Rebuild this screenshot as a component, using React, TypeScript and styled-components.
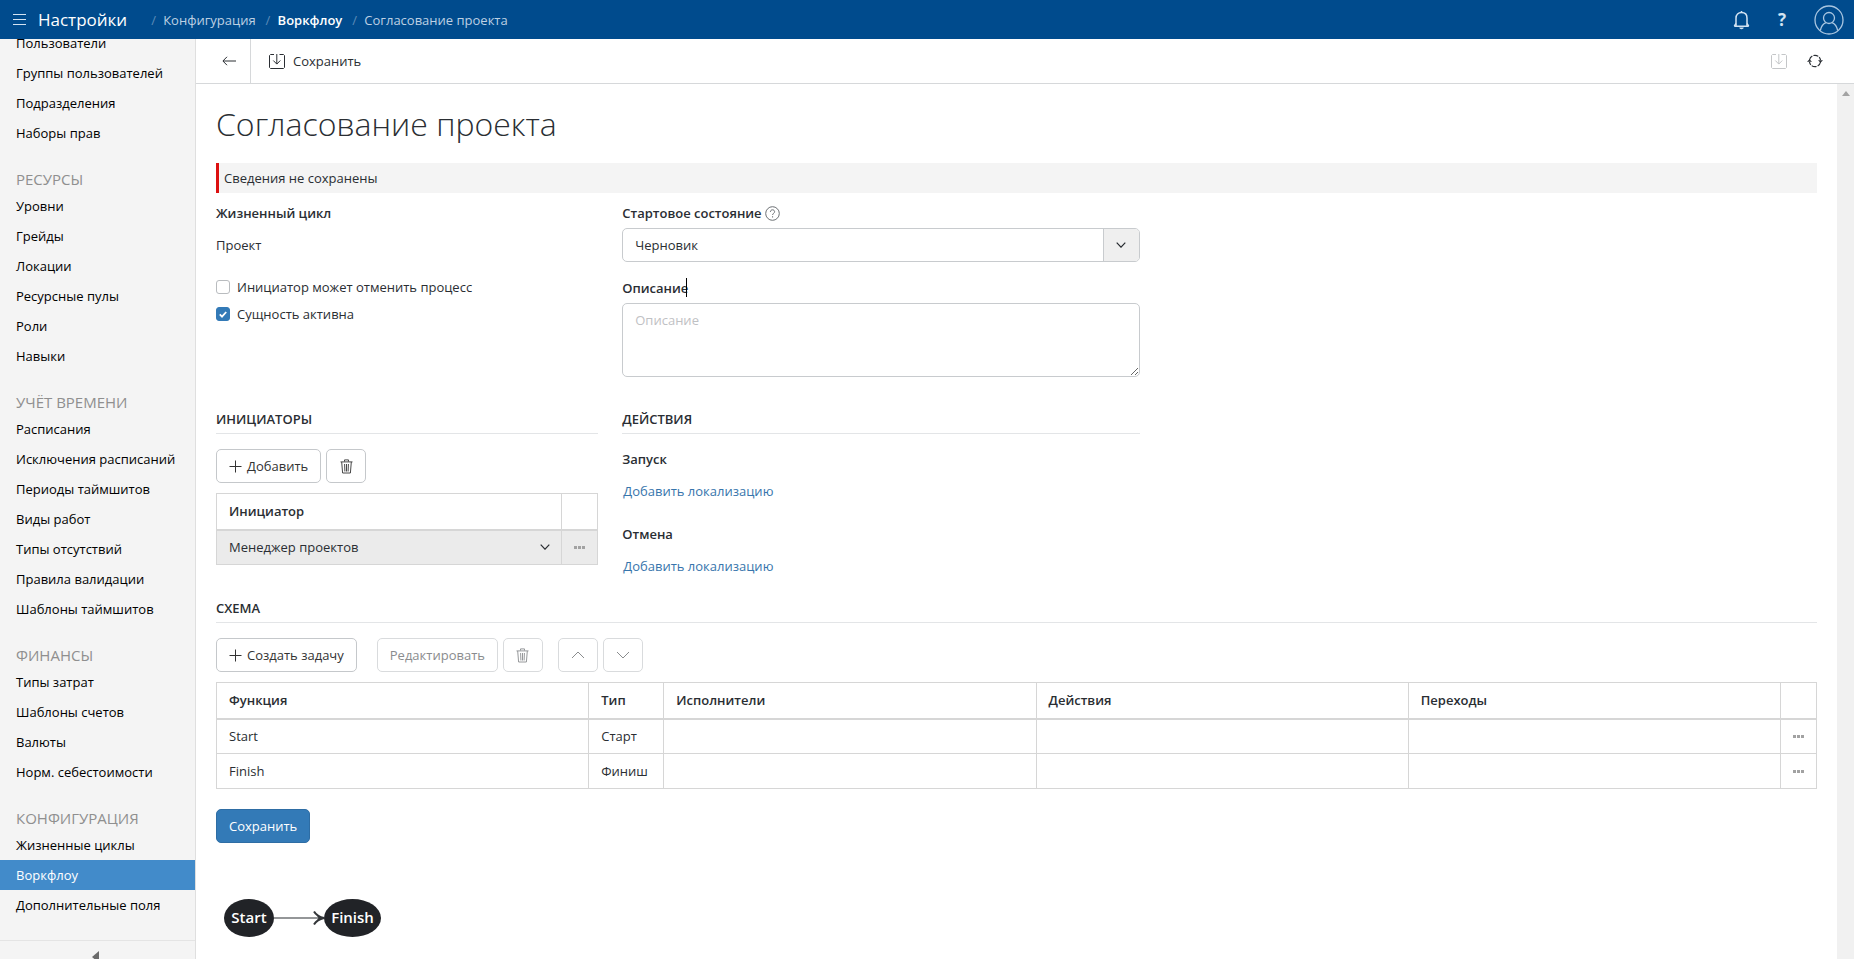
import React from 'react';
import styled, { createGlobalStyle, css } from 'styled-components';

const GlobalStyle = createGlobalStyle`
  *, *::before, *::after { box-sizing: border-box; }
  body {
    margin: 0;
    background: #fff;
    color: #2a2e33;
    font: 400 13px/20px "Open Sans", "Noto Sans", sans-serif;
  }
  button, input, select, textarea { font: inherit; color: inherit; }
  svg { display: block; flex: none; }
`;

/* ---------- shell ---------- */

const Shell = styled.div`
  display: flex;
  flex-direction: column;
  height: 100vh;
  overflow: hidden;
`;

const Header = styled.header`
  display: flex;
  align-items: center;
  flex: none;
  height: 39px;
  padding: 0 10px 0 13px;
  background: #004b8d;
  color: #fff;
`;

const HeaderButton = styled.button`
  display: flex;
  align-items: center;
  justify-content: center;
  padding: 0;
  border: 0;
  background: none;
  color: #d3e3f2;
  font-size: 17px;
  font-weight: 700;
`;

const AppTitle = styled.span`
  margin-left: 12px;
  font-size: 17px;
  font-weight: 500;
`;

const Crumbs = styled.nav`
  display: flex;
  flex: 1;
  margin-left: 24px;
`;

const Crumb = styled.a<{ $strong?: boolean }>`
  color: ${p => (p.$strong ? '#fff' : '#bdd0e3')};
  font-weight: ${p => (p.$strong ? 600 : 400)};
  text-decoration: none;
  &::before {
    content: '/';
    display: inline-block;
    width: 12px;
    color: #5d8bb8;
    font-weight: 400;
  }
  & + & { margin-left: 10px; }
`;

const HeaderActions = styled.div`
  display: flex;
  align-items: center;
  gap: 28px;
`;

const Body = styled.div`
  display: flex;
  flex: 1;
  min-height: 0;
`;

/* ---------- sidebar ---------- */

const Sidebar = styled.aside`
  display: flex;
  flex-direction: column;
  flex: none;
  width: 196px;
  border-right: 1px solid #dfdfdf;
  background: #f4f4f4;
`;

const SidebarScroll = styled.nav`
  flex: 1;
  min-height: 0;
  overflow: hidden;
`;

const SidebarList = styled.div`
  margin-top: -11px;
`;

const GroupTitle = styled.h2`
  margin: 20px 0 0;
  padding-left: 16px;
  color: #8f8f8f;
  font-size: 15px;
  font-weight: 400;
  line-height: 23px;
`;

const NavItem = styled.a<{ $active?: boolean }>`
  display: block;
  padding-left: 16px;
  color: ${p => (p.$active ? '#fff' : '#000')};
  background: ${p => (p.$active ? '#428bca' : 'transparent')};
  line-height: 30px;
  text-decoration: none;
  white-space: nowrap;
`;

const SidebarFooter = styled.button`
  display: flex;
  align-items: flex-start;
  justify-content: center;
  flex: none;
  height: 19px;
  padding: 10px 5px 0 0;
  border: 0;
  border-top: 1px solid #e4e4e4;
  background: none;
  overflow: hidden;
  color: #6b6b6b;
`;

/* ---------- main ---------- */

const Main = styled.main`
  display: flex;
  flex-direction: column;
  flex: 1;
  min-width: 0;
`;

const Toolbar = styled.div`
  display: flex;
  flex: none;
  height: 45px;
  padding-right: 31px;
  border-bottom: 1px solid #d6d8da;
`;

const ToolButton = styled.button<{ $divider?: boolean }>`
  display: flex;
  align-items: center;
  gap: 8px;
  padding: 0 14px 0 18px;
  border: 0;
  background: none;
  ${p => p.$divider && css`
    padding: 0 14px 0 26px;
    border-right: 1px solid #d6d8da;
  `}
  &:disabled { color: #c4c6c8; }
`;

const ToolbarEnd = styled.div`
  display: flex;
  margin-left: auto;
  gap: 20px;
`;

const ToolIcon = styled(ToolButton)`
  padding: 0;
`;

const Viewport = styled.div`
  display: flex;
  flex: 1;
  min-height: 0;
`;

const Content = styled.div`
  flex: 1;
  min-width: 0;
  padding: 20px 20px 0;
  overflow: hidden;
`;

const ScrollTrack = styled.div`
  display: flex;
  justify-content: center;
  flex: none;
  width: 17px;
  padding-top: 7px;
  background: #f1f1f1;
  color: #a3a3a3;
`;

const PageTitle = styled.h1`
  margin: 0 0 19px;
  font-size: 32px;
  font-weight: 300;
  line-height: 40px;
`;

const Notice = styled.div`
  padding: 5px;
  border-left: 3px solid #dc1010;
  background: #f4f4f4;
`;

const Row = styled.div<{ $top?: number; $bottom: number }>`
  display: flex;
  margin: 0 -12px;
  padding: ${p => p.$top ?? 0}px 0 ${p => p.$bottom}px;
`;

const Column = styled.div<{ $span: number }>`
  flex: none;
  width: calc(100% / 12 * ${p => p.$span});
  padding: 0 12px;
`;

const Field = styled.div`
  & + & { margin-top: 16px; }
`;

const labelStyle = css`
  display: flex;
  align-items: center;
  gap: 3px;
  width: max-content;
  margin-bottom: 5px;
  font-weight: 600;
`;

const Label = styled.label`${labelStyle}`;
const Caption = styled.div`${labelStyle}`;

const CaretLabel = styled(Label)`
  position: relative;
  &::after {
    content: '';
    position: absolute;
    right: 1px;
    top: 0;
    width: 1px;
    height: 19px;
    background: #000;
  }
`;

const Value = styled.div`
  line-height: 34px;
`;

const Checks = styled.div`
  display: grid;
  gap: 7px;
  margin-top: 15px;
`;

const Check = styled.label`
  display: flex;
  align-items: center;
  gap: 7px;
`;

const CheckBox = styled.span`
  display: grid;
  place-items: center;
  & > * { grid-area: 1 / 1; }
  svg { visibility: hidden; pointer-events: none; }
  input:checked + svg { visibility: visible; }
`;

const CheckInput = styled.input`
  appearance: none;
  width: 14px;
  height: 14px;
  margin: 0;
  border: 1px solid #b9bcbf;
  border-radius: 3px;
  background: #fff;
  &:checked { border-color: #337ab7; background: #337ab7; }
`;

const SelectBox = styled.div<{ $plain?: boolean }>`
  display: grid;
  grid-template-columns: 1fr ${p => (p.$plain ? 32 : 36)}px;
  height: ${p => (p.$plain ? 33 : 34)}px;
  ${p => !p.$plain && css`
    border: 1px solid #c8cbce;
    border-radius: 5px;
    overflow: hidden;
  `}
`;

const Select = styled.select`
  grid-area: 1 / 1 / 2 / 3;
  appearance: none;
  min-width: 0;
  padding: 0 12px;
  border: 0;
  background: transparent;
`;

const SelectArrow = styled.span<{ $plain?: boolean }>`
  display: grid;
  place-items: center;
  grid-area: 1 / 2;
  pointer-events: none;
  ${p => !p.$plain && css`
    border-left: 1px solid #c8cbce;
    background: #efefef;
  `}
`;

const TextArea = styled.textarea`
  display: block;
  width: 100%;
  height: 74px;
  padding: 6px 12px;
  border: 1px solid #c8cbce;
  border-radius: 5px;
  &::placeholder { color: #bfc1c4; opacity: 1; }
`;

const SectionTitle = styled.h2`
  margin: 0 0 15px;
  padding-bottom: 4px;
  border-bottom: 1px solid #e3e5e7;
  font-size: 13px;
  font-weight: 600;
  line-height: 20px;
`;

const ButtonBar = styled.div`
  display: flex;
  margin-bottom: 10px;
`;

const ButtonGroup = styled.div<{ $gap?: number }>`
  display: flex;
  gap: 5px;
  margin-right: ${p => p.$gap ?? 0}px;
`;

const Button = styled.button<{ $icon?: boolean; $primary?: boolean }>`
  display: flex;
  align-items: center;
  justify-content: center;
  gap: 5px;
  height: 34px;
  width: ${p => (p.$icon ? '40px' : 'auto')};
  padding: 0 ${p => (p.$icon ? 0 : 12)}px;
  border: 1px solid ${p => (p.$primary ? '#2e6da4' : '#c5c8cb')};
  border-radius: 5px;
  background: ${p => (p.$primary ? '#337ab7' : '#fff')};
  color: ${p => (p.$primary ? '#fff' : '#333')};
  white-space: nowrap;
  &:disabled { border-color: #d9dbdd; color: #8a8c8e; }
`;

const LocaleLink = styled.a`
  display: block;
  width: max-content;
  padding-left: 1px;
  color: #3775ac;
  line-height: 34px;
  text-decoration: none;
`;

const Table = styled.table`
  width: 100%;
  table-layout: fixed;
  border-collapse: collapse;
  th, td {
    height: 35px;
    padding: 0 12px;
    border: 1px solid #d6d6d6;
    text-align: left;
  }
  th {
    height: 36px;
    border-bottom-width: 2px;
    font-weight: 600;
  }
`;

const Col = styled.col<{ $w?: number }>`
  width: ${p => (p.$w ? `${p.$w}px` : 'auto')};
`;

const BodyRow = styled.tr<{ $selected?: boolean }>`
  background: ${p => (p.$selected ? '#ebebeb' : '#fff')};
`;

const ControlCell = styled.td`
  && { padding: 0; }
`;

const MoreButton = styled.button`
  display: flex;
  align-items: center;
  justify-content: center;
  width: 100%;
  height: 24px;
  padding: 0;
  border: 0;
  background: none;
  color: #a2a2a2;
`;

const Submit = styled.div`
  display: flex;
  margin: 20px 0 56px;
`;

/* ---------- icons ---------- */

const line = { fill: 'none', stroke: 'currentColor' } as const;

const MenuIcon = () => (
  <svg width="13" height="11" viewBox="0 0 13 11" {...line}><path d="M0 .5h13M0 5.5h13M0 10.5h13" /></svg>
);
const BellIcon = () => (
  <svg width="17" height="20" viewBox="0 0 17 20" {...line} strokeWidth="1.5">
    <path d="M1.3 16.2h14.4M3 16V8.2C3 4.600 5.300 2.600 8.500 2.600S14 4.600 14 8.200V16" />
    <path d="M3 13.500 1.300 16.200M14 13.500l1.700 2.700M8.500 1v1.600" />
    <path d="M6.300 17.500h4.400c0 1-1 1.700-2.200 1.700s-2.200-.7-2.200-1.700z" fill="currentColor" stroke="none" />
  </svg>
);
const UserIcon = () => (
  <svg width="30" height="30" viewBox="0 0 30 30" {...line} stroke="#a9c6e1" strokeWidth="1.3">
    <circle cx="15" cy="15" r="14" />
    <circle cx="15" cy="13" r="5.500" />
    <path d="M6.300 25.500c.8-4 3-6.800 5.700-7.900M23.700 25.500c-.8-4-3-6.800-5.700-7.900" />
  </svg>
);
const BackIcon = () => (
  <svg width="14" height="10" viewBox="0 0 14 10" {...line}><path d="M14 5H1M5 .8.900 5 5 9.200" /></svg>
);
const SaveIcon = () => (
  <svg width="16" height="17" viewBox="0 0 16 17" {...line}>
    <path d="M5 1.500H1.500l-1 1v12l1 1h13l1-1v-12l-1-1H10.500M7.800 1v10M4.300 7.500l3.500 3.600 3.500-3.600" />
  </svg>
);
const RefreshIcon = () => (
  <svg width="16" height="14" viewBox="0 0 16 14" {...line} strokeWidth="1.200">
    <path d="M2.500 6C3 3.200 5.200 1.300 8 1.300c2.700 0 5 1.900 5.500 4.700M13.500 8c-.5 2.800-2.800 4.700-5.500 4.700-2.800 0-5-1.900-5.500-4.700" strokeDasharray="5 1.200" />
    <path d="M11 6.200h5l-2.500 2.500zM0 7.800h5L2.500 5.300z" fill="currentColor" stroke="none" />
  </svg>
);
const HelpIcon = () => (
  <svg width="15" height="15" viewBox="0 0 15 15" {...line} stroke="#6c7074">
    <circle cx="7.500" cy="7.500" r="6.800" />
    <path d="M5.400 5.900c0-1.300.9-2.100 2.100-2.100s2.100.8 2.100 1.900c0 1.500-2 1.700-2 3.300M7.600 10.200v1.300" />
  </svg>
);
const PlusIcon = () => (
  <svg width="13" height="13" viewBox="0 0 13 13" {...line}><path d="M6.500 .5v12M.5 6.500h12" /></svg>
);
const TrashIcon = () => (
  <svg width="13" height="15" viewBox="0 0 13 15" {...line} strokeWidth=".9">
    <path d="M.5 2.900h12M4.500 2.500V.9h4v1.600M1.700 3l.9 11h7.800l.9-11M4.600 5l.3 7.500M6.500 5v7.500M8.400 5l-.3 7.500" />
  </svg>
);
const Chevron = ({ up, wide }: { up?: boolean; wide?: boolean }) => (
  wide
    ? <svg width="14" height="8" viewBox="0 0 14 8" {...line}><path d={up ? 'M1 7l6-6 6 6' : 'M1 1l6 6 6-6'} /></svg>
    : <svg width="10" height="6" viewBox="0 0 10 6" {...line} strokeWidth="1.200"><path d="M.7.700 5 5.200 9.300.7" /></svg>
);
const DotsIcon = () => (
  <svg width="11" height="3" viewBox="0 0 11 3" fill="currentColor" shapeRendering="crispEdges">
    <rect width="3" height="3" /><rect x="4" width="3" height="3" /><rect x="8" width="3" height="3" />
  </svg>
);
const CheckIcon = () => (
  <svg width="8" height="7" viewBox="0 0 8 7" fill="none" stroke="#fff" strokeWidth="1.800"><path d="M.8 3.400 3 5.600 7.200 1" /></svg>
);
const Diagram = () => (
  <svg width="176" height="40" viewBox="0 0 176 40" fontSize="15" fontWeight="600" textAnchor="middle">
    <path d="M58 19h48" stroke="#707376" strokeWidth="1.500" />
    <path d="M98 12.500q3 5 10 6.500-7 1.500-10 6.500" fill="none" stroke="#333639" strokeWidth="2" />
    <path d="M101 16.500l7 2.500-7 2.500 1.500-2.500z" fill="#333639" />
    <ellipse cx="33" cy="19" rx="25" ry="19" fill="#212327" />
    <ellipse cx="136.500" cy="19" rx="28.500" ry="19" fill="#212327" />
    <text x="33" y="24" fill="#fff">Start</text>
    <text x="136.500" y="24" fill="#fff">Finish</text>
  </svg>
);

/* ---------- data ---------- */

const groups: { title?: string; items: string[] }[] = [
  { items: ['Пользователи', 'Группы пользователей', 'Подразделения', 'Наборы прав'] },
  { title: 'РЕСУРСЫ', items: ['Уровни', 'Грейды', 'Локации', 'Ресурсные пулы', 'Роли', 'Навыки'] },
  {
    title: 'УЧЁТ ВРЕМЕНИ',
    items: ['Расписания', 'Исключения расписаний', 'Периоды таймшитов', 'Виды работ', 'Типы отсутствий', 'Правила валидации', 'Шаблоны таймшитов'],
  },
  { title: 'ФИНАНСЫ', items: ['Типы затрат', 'Шаблоны счетов', 'Валюты', 'Норм. себестоимости'] },
  { title: 'КОНФИГУРАЦИЯ', items: ['Жизненные циклы', 'Воркфлоу', 'Дополнительные поля'] },
];

const steps = [['Start', 'Старт'], ['Finish', 'Финиш']];

const More = () => <MoreButton type="button" aria-label="Меню строки"><DotsIcon /></MoreButton>;

export default function App() {
  return (
    <Shell>
      <GlobalStyle />
      <Header>
        <HeaderButton type="button" aria-label="Меню"><MenuIcon /></HeaderButton>
        <AppTitle>Настройки</AppTitle>
        <Crumbs>
          <Crumb href="#config">Конфигурация</Crumb>
          <Crumb href="#workflow" $strong>Воркфлоу</Crumb>
          <Crumb href="#current">Согласование проекта</Crumb>
        </Crumbs>
        <HeaderActions>
          <HeaderButton type="button" aria-label="Уведомления"><BellIcon /></HeaderButton>
          <HeaderButton type="button" aria-label="Справка">?</HeaderButton>
          <HeaderButton type="button" aria-label="Профиль"><UserIcon /></HeaderButton>
        </HeaderActions>
      </Header>

      <Body>
        <Sidebar>
          <SidebarScroll>
            <SidebarList>
              {groups.map(g => (
                <React.Fragment key={g.title ?? 'top'}>
                  {g.title && <GroupTitle>{g.title}</GroupTitle>}
                  {g.items.map(item => (
                    <NavItem key={item} href="#" $active={item === 'Воркфлоу'}>{item}</NavItem>
                  ))}
                </React.Fragment>
              ))}
            </SidebarList>
          </SidebarScroll>
          <SidebarFooter type="button" aria-label="Свернуть">
            <svg width="7" height="12" viewBox="0 0 7 12" fill="currentColor"><path d="M7 0v12L0 6z" /></svg>
          </SidebarFooter>
        </Sidebar>

        <Main>
          <Toolbar>
            <ToolButton type="button" aria-label="Назад" $divider><BackIcon /></ToolButton>
            <ToolButton type="button"><SaveIcon />Сохранить</ToolButton>
            <ToolbarEnd>
              <ToolIcon type="button" aria-label="Сохранить и закрыть" disabled><SaveIcon /></ToolIcon>
              <ToolIcon type="button" aria-label="Обновить"><RefreshIcon /></ToolIcon>
            </ToolbarEnd>
          </Toolbar>

          <Viewport>
            <Content>
              <PageTitle>Согласование проекта</PageTitle>
              <Notice role="status">Сведения не сохранены</Notice>

              <Row $top={10} $bottom={32}>
                <Column $span={3}>
                  <Field>
                    <Caption>Жизненный цикл</Caption>
                    <Value>Проект</Value>
                  </Field>
                  <Checks>
                    <Check>
                      <CheckBox><CheckInput type="checkbox" /><CheckIcon /></CheckBox>
                      Инициатор может отменить процесс
                    </Check>
                    <Check>
                      <CheckBox><CheckInput type="checkbox" defaultChecked /><CheckIcon /></CheckBox>
                      Сущность активна
                    </Check>
                  </Checks>
                </Column>
                <Column $span={4}>
                  <Field>
                    <Label htmlFor="state">Стартовое состояние <HelpIcon /></Label>
                    <SelectBox>
                      <Select id="state"><option>Черновик</option></Select>
                      <SelectArrow><Chevron /></SelectArrow>
                    </SelectBox>
                  </Field>
                  <Field>
                    <CaretLabel htmlFor="description">Описание</CaretLabel>
                    <TextArea id="description" placeholder="Описание" />
                  </Field>
                </Column>
              </Row>

              <Row $bottom={15}>
                <Column $span={3}>
                  <SectionTitle>ИНИЦИАТОРЫ</SectionTitle>
                  <ButtonBar>
                    <ButtonGroup>
                      <Button type="button"><PlusIcon />Добавить</Button>
                      <Button type="button" $icon aria-label="Удалить инициатора"><TrashIcon /></Button>
                    </ButtonGroup>
                  </ButtonBar>
                  <Table>
                    <colgroup><Col /><Col $w={36} /></colgroup>
                    <thead><tr><th>Инициатор</th><th /></tr></thead>
                    <tbody>
                      <BodyRow $selected>
                        <ControlCell>
                          <SelectBox $plain>
                            <Select aria-label="Инициатор"><option>Менеджер проектов</option></Select>
                            <SelectArrow $plain><Chevron /></SelectArrow>
                          </SelectBox>
                        </ControlCell>
                        <ControlCell><More /></ControlCell>
                      </BodyRow>
                    </tbody>
                  </Table>
                </Column>
                <Column $span={4}>
                  <SectionTitle>ДЕЙСТВИЯ</SectionTitle>
                  <Field>
                    <Caption>Запуск</Caption>
                    <LocaleLink href="#start">Добавить локализацию</LocaleLink>
                  </Field>
                  <Field>
                    <Caption>Отмена</Caption>
                    <LocaleLink href="#cancel">Добавить локализацию</LocaleLink>
                  </Field>
                </Column>
              </Row>

              <SectionTitle>СХЕМА</SectionTitle>
              <ButtonBar>
                <ButtonGroup $gap={20}>
                  <Button type="button"><PlusIcon />Создать задачу</Button>
                </ButtonGroup>
                <ButtonGroup $gap={15}>
                  <Button type="button" disabled>Редактировать</Button>
                  <Button type="button" $icon disabled aria-label="Удалить задачу"><TrashIcon /></Button>
                </ButtonGroup>
                <ButtonGroup>
                  <Button type="button" $icon disabled aria-label="Выше"><Chevron wide up /></Button>
                  <Button type="button" $icon disabled aria-label="Ниже"><Chevron wide /></Button>
                </ButtonGroup>
              </ButtonBar>
              <Table>
                <colgroup><Col /><Col $w={75} /><Col /><Col /><Col /><Col $w={36} /></colgroup>
                <thead>
                  <tr><th>Функция</th><th>Тип</th><th>Исполнители</th><th>Действия</th><th>Переходы</th><th /></tr>
                </thead>
                <tbody>
                  {steps.map(([name, type]) => (
                    <BodyRow key={name}>
                      <td>{name}</td><td>{type}</td><td /><td /><td />
                      <ControlCell><More /></ControlCell>
                    </BodyRow>
                  ))}
                </tbody>
              </Table>

              <Submit><Button type="submit" $primary>Сохранить</Button></Submit>
              <Diagram />
            </Content>
            <ScrollTrack aria-hidden="true">
              <svg width="8" height="5" viewBox="0 0 8 5" fill="currentColor"><path d="M0 5h8L4 0z" /></svg>
            </ScrollTrack>
          </Viewport>
        </Main>
      </Body>
    </Shell>
  );
}
